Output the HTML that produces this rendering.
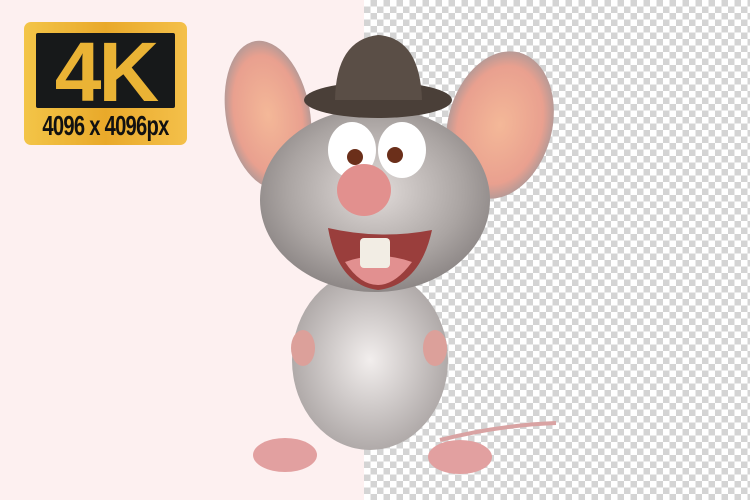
<!DOCTYPE html>
<html><head><style>
*{margin:0;padding:0}
body{width:750px;height:500px;overflow:hidden;position:relative;background:#fdf0f0;font-family:"Liberation Sans",sans-serif}
.chk{position:absolute;left:364px;top:0;width:386px;height:500px;background-color:#fff;background-image:linear-gradient(45deg,#d4d4d4 25%,transparent 25%,transparent 75%,#d4d4d4 75%),linear-gradient(45deg,#d4d4d4 25%,transparent 25%,transparent 75%,#d4d4d4 75%);background-size:13px 13px;background-position:0 0,6.5px 6.5px}
.badge{position:absolute;left:24px;top:22px;width:163px;height:123px;border-radius:7px;background:linear-gradient(90deg,#f3c548,#e9a92a,#f4c04a)}
.inner{position:absolute;left:12px;top:11px;width:139px;height:75px;background:#17191a;border-radius:2px;color:#eab335;font-weight:bold;font-size:84px;text-align:center;line-height:78px;letter-spacing:-3px;overflow:hidden}
.sub{position:absolute;left:-20px;top:88px;width:203px;text-align:center;font-weight:bold;font-size:28px;line-height:32px;color:#111;letter-spacing:-1px;transform:scaleX(.72)}
</style></head><body>
<div class="chk"></div>
<div class="badge"><div class="inner">4K</div><div class="sub">4096 x 4096px</div></div>
<svg style="position:absolute;left:0;top:0" width="750" height="500">
<defs>
<radialGradient id="ear" cx=".5" cy=".5" r=".5"><stop offset="0" stop-color="#f4b898"/><stop offset=".8" stop-color="#e9a08f"/><stop offset="1" stop-color="#b89a96"/></radialGradient>
<radialGradient id="fur" cx=".5" cy=".45" r=".55"><stop offset="0" stop-color="#e2dcda"/><stop offset=".7" stop-color="#aaa4a2"/><stop offset="1" stop-color="#8d8786"/></radialGradient>
<radialGradient id="body" cx=".5" cy=".5" r=".5"><stop offset="0" stop-color="#f2eeed"/><stop offset="1" stop-color="#b0aaa9"/></radialGradient>
</defs>
<path d="M440 440 Q500 425 556 423" stroke="#d9a3a3" stroke-width="4" fill="none"/>
<ellipse cx="268" cy="115" rx="42" ry="75" transform="rotate(-10 268 115)" fill="url(#ear)"/>
<ellipse cx="500" cy="125" rx="52" ry="75" transform="rotate(15 500 125)" fill="url(#ear)"/>
<ellipse cx="370" cy="360" rx="78" ry="90" fill="url(#body)"/>
<ellipse cx="303" cy="348" rx="12" ry="18" fill="#dca09a"/>
<ellipse cx="435" cy="348" rx="12" ry="18" fill="#dca09a"/>
<ellipse cx="375" cy="200" rx="115" ry="92" fill="url(#fur)"/>
<ellipse cx="378" cy="100" rx="74" ry="18" fill="#4a3f38"/>
<path d="M335 100 Q336 40 378 35 Q420 38 422 100 Z" fill="#5a4e46"/>
<ellipse cx="352" cy="150" rx="24" ry="28" fill="#fff"/>
<ellipse cx="402" cy="150" rx="24" ry="28" fill="#fff"/>
<circle cx="355" cy="157" r="8" fill="#6b2f1a"/>
<circle cx="395" cy="155" r="8" fill="#6b2f1a"/>
<path d="M328 228 Q380 240 432 230 Q420 285 378 290 Q338 285 328 228Z" fill="#9a3e3c"/>
<path d="M345 262 Q378 250 412 262 Q395 285 378 285 Q360 285 345 262Z" fill="#e29090"/>
<rect x="360" y="238" width="30" height="30" rx="4" fill="#f2ede4"/>
<ellipse cx="364" cy="190" rx="27" ry="26" fill="#e2908e"/>
<ellipse cx="285" cy="455" rx="32" ry="17" fill="#e2a0a0"/>
<ellipse cx="460" cy="457" rx="32" ry="17" fill="#e2a0a0"/>
</svg>
</body></html>
